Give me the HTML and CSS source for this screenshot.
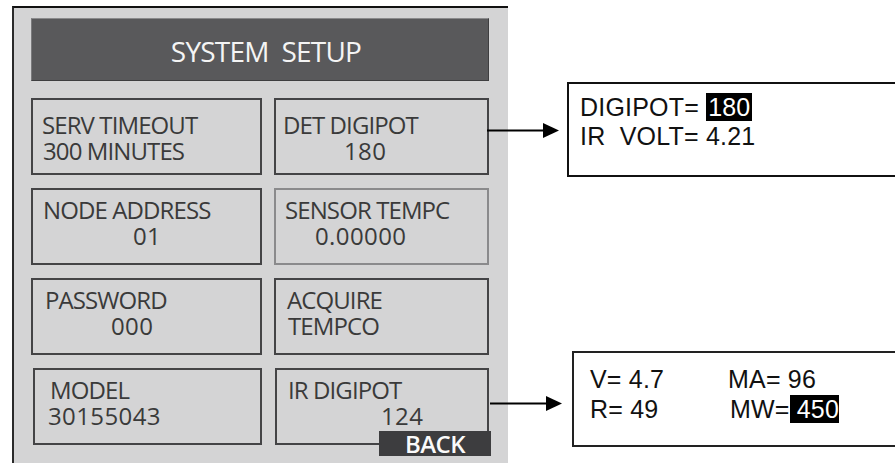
FILE: index.html
```html
<!DOCTYPE html>
<html>
<head>
<meta charset="utf-8">
<link rel="stylesheet" href="styles.css">
</head>
<body>
<div class="page">
  <section class="panel">
    <div class="header">SYSTEM&nbsp; SETUP</div>
    <div class="grid">
      <div class="btn b-serv"><div class="l1">SERV TIMEOUT</div><div class="l2">300 MINUTES</div></div>
      <div class="btn b-det"><div class="l1">DET DIGIPOT</div><div class="l2 num">180</div></div>
      <div class="btn b-node"><div class="l1">NODE ADDRESS</div><div class="l2 num">01</div></div>
      <div class="btn b-sens light"><div class="l1">SENSOR TEMPC</div><div class="l2 num">0.00000</div></div>
      <div class="btn b-pass"><div class="l1">PASSWORD</div><div class="l2 num">000</div></div>
      <div class="btn b-acq"><div class="l1">ACQUIRE</div><div class="l2">TEMPCO</div></div>
      <div class="btn b-model"><div class="l1">MODEL</div><div class="l2 num">30155043</div></div>
      <div class="btn b-ir"><div class="l1">IR DIGIPOT</div><div class="l2 num">124</div><div class="back">BACK</div></div>
    </div>
  </section>
  <aside class="callouts">
    <div class="box box1">
      <div class="line">DIGIPOT= <span class="hl">180</span></div>
      <div class="line">IR&nbsp; VOLT= 4.21</div>
    </div>
    <div class="box box2">
      <div class="cell">V= 4.7</div>
      <div class="cell">MA= 96</div>
      <div class="cell">R= 49</div>
      <div class="cell mw">MW=<span class="hl hl-wide">&nbsp;450</span></div>
    </div>
  </aside>
  <svg class="arrow a1" width="73" height="17" viewBox="0 0 73 17"><line x1="0" y1="8.5" x2="58" y2="8.5" stroke="#000" stroke-width="2"/><polygon points="56,1 72,8.5 56,16" fill="#000"/></svg>
  <svg class="arrow a2" width="73" height="17" viewBox="0 0 73 17"><line x1="0" y1="8.5" x2="58" y2="8.5" stroke="#000" stroke-width="2"/><polygon points="56,1 72,8.5 56,16" fill="#000"/></svg>
</div>
</body>
</html>
```
FILE: styles.css
```css
* { box-sizing: border-box; }
html, body { margin: 0; padding: 0; background: #fff; overflow: hidden; }
.page {
  position: relative;
  width: 895px;
  height: 463px;
  display: flex;
  align-items: flex-start;
  overflow: hidden;
}
.panel {
  margin-left: 12px;
  margin-top: 6px;
  width: 496px;
  height: 457px;
  flex: none;
  background: #d4d4d5;
  border-left: 2px solid #2a2a2a;
  border-top: 2px solid #111;
  padding-top: 10px;
  padding-left: 17px;
  font-family: "Open Sans", "Noto Sans", sans-serif;
  color: #3a3a3a;
}
.header {
  width: 458px;
  height: 63px;
  background: #59595b;
  border: 1px solid #3e3e40;
  border-top-color: #8a8a8c;
  border-left-color: #7a7a7c;
  color: #f4f4f4;
  text-align: center;
  font-size: 28px;
  letter-spacing: -0.8px;
  padding-top: 5px;
  padding-left: 12px;
  line-height: 55px;
  white-space: nowrap;
}
.grid {
  margin-top: 17px;
  display: grid;
  grid-template-columns: 231px 215px;
  grid-auto-rows: 77px;
  column-gap: 12px;
  row-gap: 13px;
}
.btn {
  position: relative;
  border: 2px solid #444446;
  padding-top: 7px;
  font-size: 24px;
  line-height: 26px;
  letter-spacing: -0.9px;
  white-space: nowrap;
}
.btn.light { border-color: #8a8a8c; }
.num { letter-spacing: 0.4px; }
.b-serv { padding-top: 12px; padding-left: 9px; }
.b-serv .l2 { padding-left: 1px; }
.b-det { padding-top: 12px; padding-left: 7px; }
.b-det .l2 { padding-left: 61px; }
.b-node { padding-left: 10px; }
.b-node .l2 { padding-left: 90px; }
.b-sens { padding-left: 9px; }
.b-sens .l2 { padding-left: 30px; }
.b-pass { padding-left: 12px; }
.b-pass .l2 { padding-left: 66px; }
.b-acq { padding-left: 11px; }
.b-acq .l2 { padding-left: 1px; }
.b-model { padding-left: 15px; margin-left: 2px; }
.b-model .l2 { margin-left: -2px; }
.b-ir { padding-left: 11px; margin-left: 1px; }
.b-ir .l2 { padding-left: 93px; }
.back {
  position: absolute;
  right: -4px;
  bottom: -13px;
  width: 112px;
  height: 25px;
  background: #3d3d3f;
  color: #fafafa;
  font-weight: 600;
  font-size: 24px;
  line-height: 25px;
  letter-spacing: -0.5px;
  text-align: center;
}
.callouts {
  display: flex;
  flex-direction: column;
  margin-left: 59px;
  font-family: "Liberation Sans", Arial, sans-serif;
  color: #111;
  font-size: 25px;
  letter-spacing: 0.2px;
}
.box {
  width: 340px;
  background: #fff;
  border: 2px solid #111;
  white-space: nowrap;
}
.box1 {
  margin-top: 82px;
  height: 95px;
  padding: 9px 0 0 11px;
  line-height: 29px;
}
.box2 {
  margin-top: 174px;
  margin-left: 5px;
  height: 96px;
  border-color: #222;
  padding: 11px 0 0 16px;
  line-height: 30px;
  display: grid;
  grid-template-columns: 138px auto;
  align-content: start;
}
.mw { padding-left: 2px; }
.hl {
  background: #000;
  color: #fff;
  padding: 0 2px;
}
.hl-wide { padding: 0; }
.arrow { position: absolute; }
.a1 { left: 487px; top: 122px; }
.a2 { left: 490px; top: 395px; }
```
